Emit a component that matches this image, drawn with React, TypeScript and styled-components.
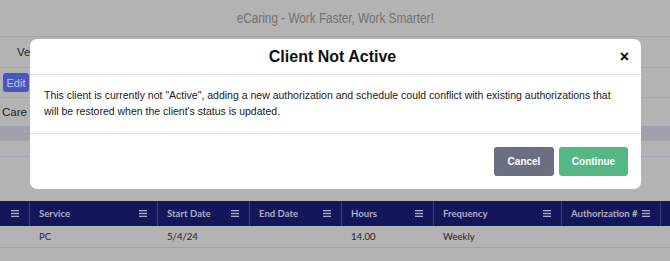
import React, { ReactElement } from 'react';
import styled, { createGlobalStyle } from 'styled-components';

const GlobalStyle = createGlobalStyle`
  html, body {
    margin: 0;
    padding: 0;
    background: #b3b3b3;
    overflow: hidden;
  }
`;

const Page = styled.div`
  position: relative;
  width: 670px;
  height: 261px;
  overflow: hidden;
  background: #b3b3b3;
  font-family: "Liberation Sans", Arial, sans-serif;
`;

const TopBar = styled.div`
  height: 36px;
  border-bottom: 1px solid #a4a4a4;
  display: flex;
  align-items: center;
  justify-content: center;
  font-size: 14px;
  color: #727272;
`;

const Slogan = styled.span`
  display: inline-block;
  transform: scaleX(0.84);
`;

const InfoRow = styled.div<{ $h: number; $pad: number; $noLine?: boolean }>`
  height: ${(p) => p.$h}px;
  display: flex;
  align-items: center;
  padding-left: ${(p) => p.$pad}px;
  border-bottom: ${(p) => (p.$noLine ? 'none' : '1px solid #a9a9a9')};
  font-size: 11.5px;
  color: #1f1f1f;
`;

const EditButton = styled.div`
  width: 26px;
  height: 19px;
  border-radius: 3px;
  background: #4a56bf;
  color: #c3c6e6;
  font-size: 11px;
  display: flex;
  align-items: center;
  justify-content: center;
`;

const Band = styled.div`
  height: 15px;
  background: #9fa2ad;
`;

const PlainRow = styled.div`
  height: 15px;
  border-bottom: 1px solid #a3a6b2;
`;

const Gap = styled.div`
  height: 44px;
`;

const Grid = styled.div`
  display: grid;
  grid-template-columns: 29px 128px 92px 92px 92px 128px 99px 1fr;
  font-family: Lato, "Open Sans", sans-serif;
  font-size: 9.6px;
`;

const HeadCell = styled.div<{ $first?: boolean }>`
  height: 25px;
  background: #14165a;
  color: #acaec6;
  font-weight: 700;
  display: flex;
  align-items: center;
  justify-content: ${(p) => (p.$first ? 'flex-end' : 'space-between')};
  padding: 0 10px 0 9px;
  border-left: ${(p) => (p.$first ? 'none' : '1px solid #3a3d78')};
  white-space: nowrap;
  overflow: hidden;
`;

const BodyCell = styled.div`
  height: 21px;
  display: flex;
  align-items: center;
  padding-left: 10px;
  border-bottom: 1px solid #a2a2a2;
  color: #262626;
`;

const MenuIcon = () => (
  <svg width="8" height="7" viewBox="0 0 8 7">
    <rect x="0" y="0" width="8" height="1.3" fill="#acaec6" />
    <rect x="0" y="2.85" width="8" height="1.3" fill="#acaec6" />
    <rect x="0" y="5.7" width="8" height="1.3" fill="#acaec6" />
  </svg>
);

const Modal = styled.div`
  position: absolute;
  left: 30px;
  top: 39px;
  width: 611px;
  height: 150px;
  background: #fff;
  border-radius: 7px;
  display: flex;
  flex-direction: column;
`;

const ModalHeader = styled.div`
  height: 35px;
  border-bottom: 1px solid #e3e3e3;
  display: flex;
  align-items: center;
  justify-content: center;
  padding-right: 6px;
  position: relative;
`;

const Title = styled.div`
  font-size: 16px;
  font-weight: 700;
  color: #111;
`;

const Close = styled.div`
  position: absolute;
  right: 12px;
  top: 9px;
  font-size: 16px;
  font-weight: 700;
  color: #000;
`;

const ModalBody = styled.div`
  height: 59px;
  border-bottom: 1px solid #e3e3e3;
  padding: 12px 14px 0 14px;
  box-sizing: border-box;
  font-size: 10.5px;
  line-height: 16px;
  color: #1a1a1a;
`;

const ModalFooter = styled.div`
  flex: 1;
  display: flex;
  justify-content: flex-end;
  align-items: flex-start;
  gap: 5px;
  padding: 13px 13px 0 0;
`;

const Button = styled.div<{ $bg: string; $w: number }>`
  width: ${(p) => p.$w}px;
  height: 29px;
  border-radius: 3px;
  background: ${(p) => p.$bg};
  color: #fff;
  font-size: 10px;
  font-weight: 700;
  display: flex;
  align-items: center;
  justify-content: center;
`;

const columns = ['Service', 'Start Date', 'End Date', 'Hours', 'Frequency', 'Authorization #', ''];
const row = ['', 'PC', '5/4/24', '', '14.00', 'Weekly', '', ''];

const App = (): ReactElement => {
  return (
    <Page>
      <GlobalStyle />
      <TopBar>
        <Slogan>eCaring - Work Faster, Work Smarter!</Slogan>
      </TopBar>
      <InfoRow $h={30} $pad={17}>Ve</InfoRow>
      <InfoRow $h={29} $pad={3}>
        <EditButton>Edit</EditButton>
      </InfoRow>
      <InfoRow $h={28} $pad={2} $noLine>Care P</InfoRow>
      <Band />
      <PlainRow />
      <Gap />
      <Grid>
        <HeadCell $first>
          <MenuIcon />
        </HeadCell>
        {columns.map((c, i) => (
          <HeadCell key={i}>
            <span>{c}</span>
            {i < 6 && <MenuIcon />}
          </HeadCell>
        ))}
        {row.map((c, i) => (
          <BodyCell key={i}>{c}</BodyCell>
        ))}
      </Grid>
      <Modal>
        <ModalHeader>
          <Title>Client Not Active</Title>
          <Close>×</Close>
        </ModalHeader>
        <ModalBody>
          This client is currently not "Active", adding a new authorization and schedule could conflict with existing
          authorizations that will be restored when the client's status is updated.
        </ModalBody>
        <ModalFooter>
          <Button $bg="#6b7080" $w={60}>Cancel</Button>
          <Button $bg="#55b784" $w={69}>Continue</Button>
        </ModalFooter>
      </Modal>
    </Page>
  );
};

export default App;
